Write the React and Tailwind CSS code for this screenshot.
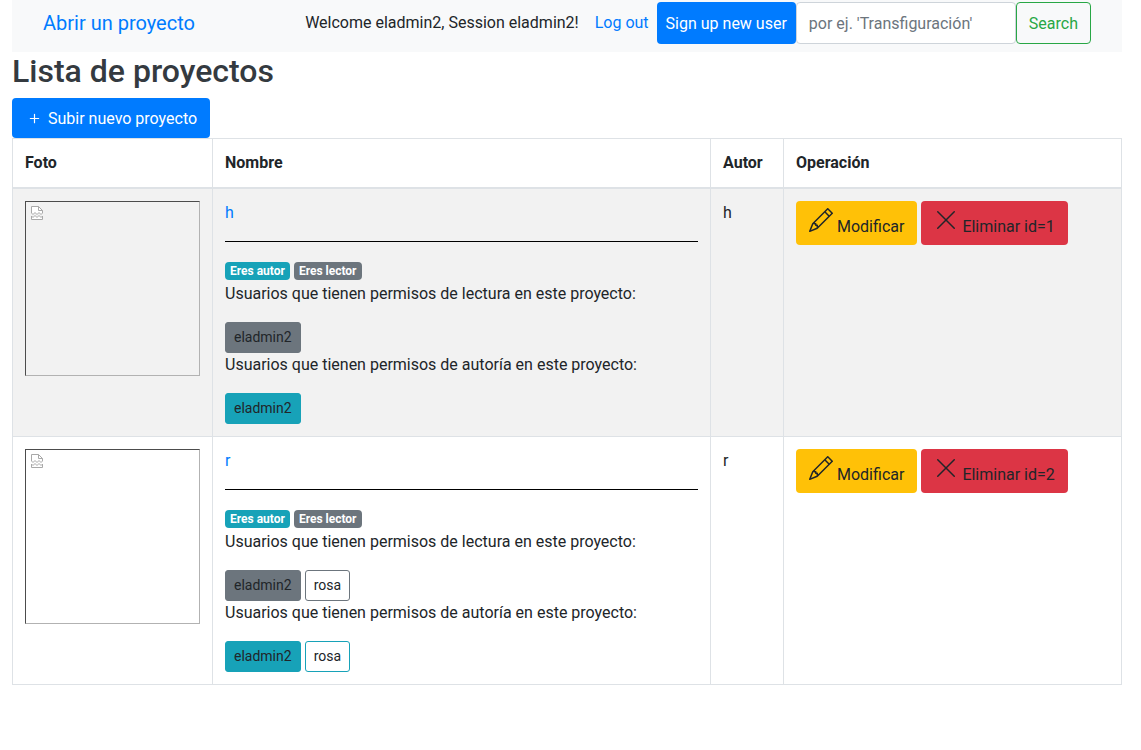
const projects = [
  { id: 1, name: "h", author: "h", others: [] },
  { id: 2, name: "r", author: "r", others: ["rosa"] },
];

function PlusIcon() {
  return (
    <svg className="size-[19px]" viewBox="0 0 16 16" fill="currentColor" aria-hidden="true">
      <path d="M8 4a.5.5 0 0 1 .5.5v3h3a.5.5 0 0 1 0 1h-3v3a.5.5 0 0 1-1 0v-3h-3a.5.5 0 0 1 0-1h3v-3A.5.5 0 0 1 8 4z" />
    </svg>
  );
}

function PencilIcon() {
  return (
    <svg className="size-6" viewBox="0 0 16 16" fill="currentColor" aria-hidden="true">
      <path d="M12.146.146a.5.5 0 0 1 .708 0l3 3a.5.5 0 0 1 0 .708l-10 10a.5.5 0 0 1-.168.11l-5 2a.5.5 0 0 1-.65-.65l2-5a.5.5 0 0 1 .11-.168l10-10zM11.207 2.5 13.5 4.793 14.793 3.5 12.5 1.207 11.207 2.5zm1.586 3L10.5 3.207 4 9.707V10h.5a.5.5 0 0 1 .5.5v.5h.5a.5.5 0 0 1 .5.5v.5h.293l6.5-6.5zm-9.761 5.175-.106.106-1.528 3.821 3.821-1.528.106-.106A.5.5 0 0 1 5 12.5V12h-.5a.5.5 0 0 1-.5-.5V11h-.5a.5.5 0 0 1-.468-.325z" />
    </svg>
  );
}

function CrossIcon() {
  return (
    <svg className="size-6" viewBox="0 0 16 16" fill="currentColor" aria-hidden="true">
      <path d="M13.854 2.146a.5.5 0 0 1 0 .708l-11 11a.5.5 0 0 1-.708-.708l11-11a.5.5 0 0 1 .708 0z" />
      <path d="M2.146 2.146a.5.5 0 0 0 0 .708l11 11a.5.5 0 0 0 .708-.708l-11-11a.5.5 0 0 0-.708 0z" />
    </svg>
  );
}

function MissingPhoto() {
  return (
    <div className="size-[175px] border border-t-[#4c4c4c] border-l-[#4c4c4c] border-r-[#b2b2b2] border-b-[#b2b2b2] p-1">
      <svg className="size-4" viewBox="0 0 16 16" fill="#fff" stroke="#a9a9a9" aria-hidden="true">
        <path d="M1.5 7V.5h7l4 4V7l-1.5 1.5L9 6.500 7 8.500 5 6.500 3 8.500z" />
        <path d="M8.500.5v4h4" fill="none" />
        <path d="M1.500 13.500V10L3 11.500l2-2 2 2 2-2 2 2 1.500-1.500v3.500z" />
      </svg>
    </div>
  );
}

function UserButton({ className, children }) {
  return (
    <button type="button" className={`rounded-[3px] border px-2 py-1 text-sm leading-[21px] ${className}`}>
      {children}
    </button>
  );
}

function Permissions({ kind, others, solid, outline }) {
  return (
    <div>
      <p className="mb-4">Usuarios que tienen permisos de {kind} en este proyecto:</p>
      <div className="flex flex-wrap gap-1">
        <UserButton className={solid}>eladmin2</UserButton>
        {others.map((user) => (
          <UserButton key={user} className={outline}>{user}</UserButton>
        ))}
      </div>
    </div>
  );
}

function ProjectRow({ project }) {
  const cell = "border border-[#dee2e6] p-3 align-top";
  return (
    <tr className="odd:bg-[#f2f2f2]">
      <td className={cell}><MissingPhoto /></td>
      <td className={cell}>
        <a href="#proyecto" className="text-[#007bff]">{project.name}</a>
        <hr className="my-4 border-black" />
        <div className="flex h-6 items-center gap-1 pt-0.5 text-xs leading-3 font-bold text-white">
          <span className="rounded bg-[#17a2b8] px-[5px] py-[3px]">Eres autor</span>
          <span className="rounded bg-[#6c757d] px-[5px] py-[3px]">Eres lector</span>
        </div>
        <Permissions
          kind="lectura"
          others={project.others}
          solid="border-[#6c757d] bg-[#6c757d]"
          outline="border-[#6c757d]"
        />
        <Permissions
          kind="autoría"
          others={project.others}
          solid="border-[#17a2b8] bg-[#17a2b8]"
          outline="border-[#17a2b8]"
        />
      </td>
      <td className={cell}>{project.author}</td>
      <td className={cell}>
        <div className="flex flex-wrap gap-1">
          <button type="button" className="flex h-11 gap-1 rounded bg-[#ffc107] px-[13px] pt-[7px]">
            <PencilIcon />
            <span className="pt-[7px]">Modificar</span>
          </button>
          <button type="button" className="flex h-11 gap-1 rounded bg-[#dc3545] px-[13px] pt-[7px]">
            <CrossIcon />
            <span className="pt-[7px]">Eliminar id={project.id}</span>
          </button>
        </div>
      </td>
    </tr>
  );
}

export default function App() {
  return (
    <div className="pr-[19px] pl-3 font-[Roboto,sans-serif] text-base text-[#212529]">
      <nav className="flex items-start justify-between bg-[#f8f9fa] px-[31px] pt-0.5 pb-2">
        <a href="#abrir" className="pt-1.5 text-xl leading-[30px] text-[#007bff]">Abrir un proyecto</a>
        <form className="flex" onSubmit={(e) => e.preventDefault()}>
          <p className="pt-[9px] pr-4">Welcome eladmin2, Session eladmin2!</p>
          <a href="#salir" className="pt-[9px] pr-2 text-[#007bff]">Log out</a>
          <button type="button" className="h-[42px] rounded bg-[#007bff] px-[9px] pt-px text-white">
            Sign up new user
          </button>
          <input
            type="search"
            aria-label="Buscar"
            placeholder="por ej. 'Transfiguración'"
            className="h-[42px] w-[220px] rounded border border-[#ced4da] bg-white px-3 placeholder:text-[#6c757d]"
          />
          <button type="submit" className="h-[42px] rounded border border-[#28a745] px-3 pt-px text-[#28a745]">
            Search
          </button>
        </form>
      </nav>
      <main>
        <h1 className="mb-2 text-[32px] leading-[38px] font-medium text-[#343a40]">Lista de proyectos</h1>
        <button type="button" className="flex h-10 items-center gap-1 rounded bg-[#007bff] px-[13px] pt-px text-white">
          <PlusIcon />
          Subir nuevo proyecto
        </button>
        <table className="w-full border-collapse border border-[#dee2e6] text-left">
          <colgroup>
            <col className="w-[200px]" />
            <col />
            <col className="w-[73px]" />
            <col className="w-[338px]" />
          </colgroup>
          <thead>
            <tr>
              {["Foto", "Nombre", "Autor", "Operación"].map((title) => (
                <th key={title} className="border border-b-2 border-[#dee2e6] p-3 font-bold">{title}</th>
              ))}
            </tr>
          </thead>
          <tbody>
            {projects.map((project) => (
              <ProjectRow key={project.id} project={project} />
            ))}
          </tbody>
        </table>
      </main>
    </div>
  );
}
